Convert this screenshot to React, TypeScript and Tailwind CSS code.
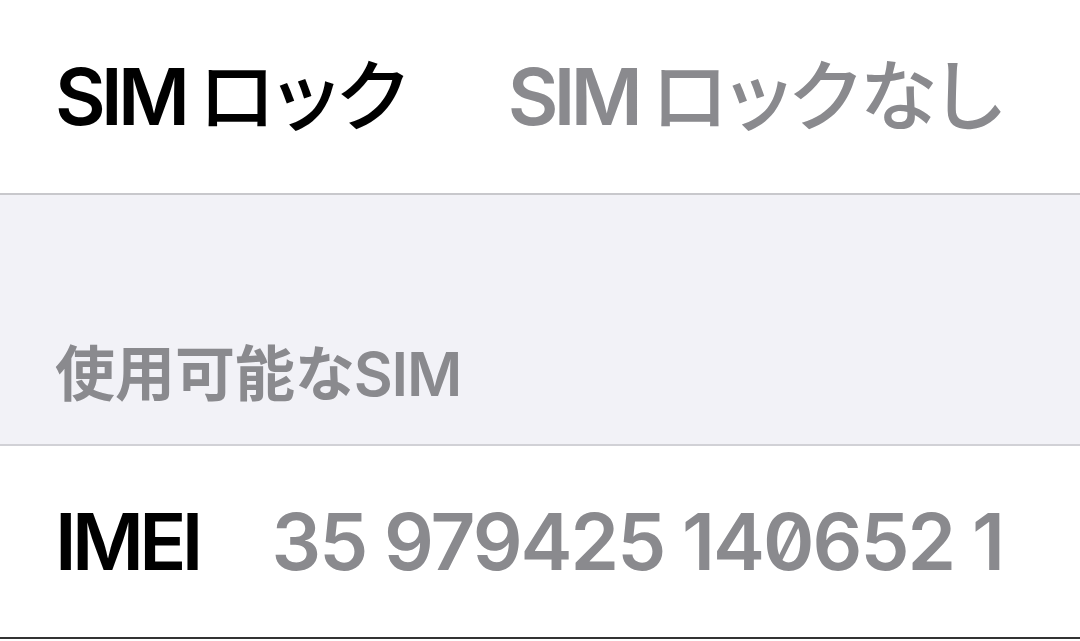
import React from 'react';

const font = "font-['Inter','Noto_Sans_CJK_JP',sans-serif]";

const SimText = ({ rest }: { rest: string }) => (
  <>
    <span className="tracking-[-0.06em]">SIM</span>
    <span className="ml-[14px] font-medium [font-feature-settings:'palt']">{rest}</span>
  </>
);

export default function App() {
  return (
    <div className={`w-[1080px] h-[641px] overflow-hidden bg-white ${font}`}>
      <div className="flex h-[193px] items-center justify-between bg-white pl-[55px] pr-[78px]">
        <span className="text-[78px] leading-none font-semibold text-black">
          <SimText rest="ロック" />
        </span>
        <span className="text-[78px] leading-none font-semibold text-[#8a8a8e]">
          <SimText rest="ロックなし" />
        </span>
      </div>
      <div className="h-[2px] bg-[#c8c8cc]" />
      <div className="flex h-[249px] items-end bg-[#f2f2f7] pl-[55px] pb-[40px]">
        <span className="text-[60px] leading-none font-semibold text-[#8a8a8e] [font-feature-settings:'palt']">
          使用可能な<span className="tracking-[-0.02em]">SIM</span>
        </span>
      </div>
      <div className="h-[2px] bg-[#d1d1d6]" />
      <div className="flex h-[193px] items-center justify-between border-b-2 border-[#333] bg-white pl-[55px] pr-[77px]">
        <span className="text-[78px] leading-none font-semibold text-black tracking-[-0.06em]">IMEI</span>
        <span className="text-[78px] leading-none font-semibold text-[#8a8a8e] tracking-[-0.025em] [font-feature-settings:'zero']">
          35 979425 140652 1
        </span>
      </div>
    </div>
  );
}
